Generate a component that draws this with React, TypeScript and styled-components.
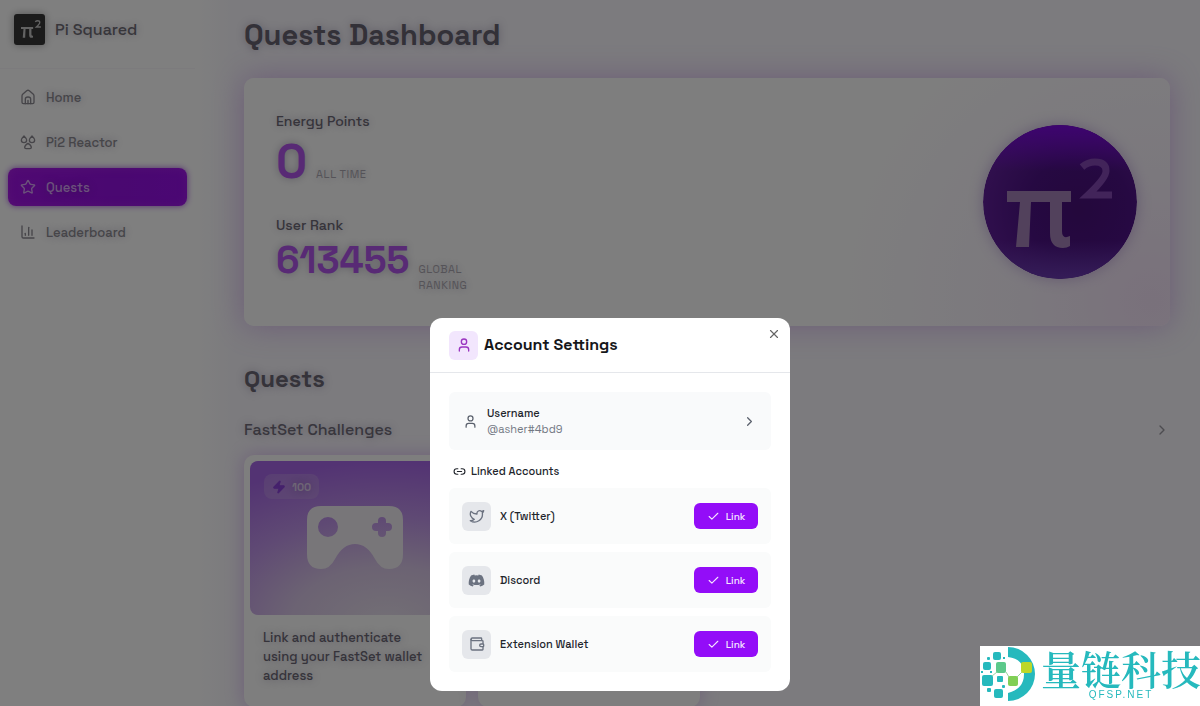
import React from 'react';
import styled, { createGlobalStyle, css } from 'styled-components';
import { Star, ChartColumn, User, X, ChevronRight, Link2, Twitter, Wallet, Check, Zap } from 'lucide-react';
import { FaDiscord } from 'react-icons/fa';

const GlobalStyle = createGlobalStyle`
  *, *::before, *::after { box-sizing: border-box; }
  body {
    margin: 0;
    overflow: hidden;
    font-family: "Space Grotesk", Inter, "Liberation Sans", sans-serif;
    background: #fbfaff;
    color: #6f6c76;
  }
  h1, h2, h3, p { margin: 0; font-weight: inherit; }
  button { font: inherit; color: inherit; border: 0; background: none; padding: 0; cursor: pointer; }
  svg { flex-shrink: 0; }
`;

const Shell = styled.div`
  display: flex;
  height: 100vh;
  overflow: hidden;
  text-shadow: 0 0 8px rgba(60, 50, 90, 0.35);
`;

const Sidebar = styled.aside`
  flex: 0 0 195px;
  background: #fff;
`;

const Brand = styled.div`
  display: flex;
  align-items: center;
  gap: 10px;
  height: 69px;
  padding: 0 14px 10px;
  border-bottom: 1px solid #f8f7fa;
  font-size: 16px;
  font-weight: 500;
`;

const BrandMark = styled.svg`
  width: 31px;
  height: 31px;
  border-radius: 3px;
  background: #363636;
  box-shadow: 0 0 8px rgba(0, 0, 0, 0.35);
`;

const Nav = styled.nav`
  display: flex;
  flex-direction: column;
  gap: 7px;
  padding: 9px 8px;
`;

const NavLink = styled.a<{ $active?: boolean }>`
  display: flex;
  align-items: center;
  gap: 10px;
  height: 38px;
  padding: 0 12px;
  border-radius: 8px;
  color: #8c8a92;
  font-size: 13px;
  font-weight: 500;
  text-decoration: none;
  ${({ $active }) =>
    $active &&
    css`
      color: #d6a5f5;
      background: linear-gradient(90deg, #a012e6, #9410e2 60%, #960fe8);
      box-shadow: 0 0 6px rgba(130, 20, 210, 0.7), inset 0 0 8px rgba(190, 60, 230, 0.4);
    `}
`;

const Main = styled.main`
  flex: 1;
  min-width: 0;
  padding: 18px 30px 0 49px;
  background: linear-gradient(90deg, #fff, #f8f6fc 40px);
`;

const PageTitle = styled.h1`
  font-size: 29px;
  line-height: 34px;
  font-weight: 600;
  color: #666271;
`;

const Stats = styled.section`
  display: flex;
  align-items: center;
  justify-content: space-between;
  height: 248px;
  margin-top: 26px;
  padding: 0 33px 0 32px;
  border-radius: 10px;
  background: radial-gradient(circle at 98% 90%, #f3e2f7 0, #f7f1fb 130px, #fdfdfd 320px);
  box-shadow: 0 0 30px rgba(170, 100, 220, 0.42);
`;

const StatList = styled.div`
  display: flex;
  flex-direction: column;
  gap: 24px;
`;

const StatLabel = styled.h3`
  font-size: 14px;
  line-height: 18px;
  font-weight: 500;
  color: #6d6976;
`;

const StatRow = styled.div`
  display: flex;
  align-items: baseline;
  gap: 8px;
  margin-top: 2px;
`;

const StatValue = styled.strong<{ $large?: boolean }>`
  font-size: ${({ $large }) => ($large ? 48 : 38)}px;
  line-height: ${({ $large }) => ($large ? 60 : 48)}px;
  font-weight: 700;
  color: #b054ea;
`;

const StatNote = styled.span`
  width: 64px;
  padding-left: 1px;
  font-size: 11px;
  line-height: 16px;
  letter-spacing: 0.05em;
  color: #aaa7b0;
`;

const Orb = styled.svg`
  width: 154px;
  height: 154px;
  border-radius: 50%;
  box-shadow: 0 0 14px rgba(110, 60, 170, 0.35);
`;

const SectionTitle = styled.h2`
  margin-top: 38px;
  font-size: 24px;
  line-height: 30px;
  font-weight: 600;
  color: #6b6775;
`;

const GroupHeader = styled.div`
  display: flex;
  align-items: center;
  justify-content: space-between;
  margin-top: 24px;
  font-size: 16px;
  line-height: 24px;
  font-weight: 500;
  color: #716d7b;
`;

const Cards = styled.div`
  display: flex;
  gap: 12px;
  margin-top: 13px;
`;

const Card = styled.article`
  flex: 0 0 222px;
  height: 252px;
  padding: 6px;
  border-radius: 10px;
  background: #fcfcfc;
  box-shadow: 0 0 18px rgba(170, 100, 220, 0.38);
`;

const CardArt = styled.div`
  position: relative;
  display: flex;
  align-items: center;
  justify-content: center;
  height: 154px;
  border-radius: 8px;
  background: radial-gradient(ellipse 130% 105% at 65% 105%, #e6dfeb 0, #d8c6e6 35%, #bf94e8 65%, #a666e6 100%);
`;

const Points = styled.span`
  position: absolute;
  top: 13px;
  left: 14px;
  display: flex;
  align-items: center;
  gap: 6px;
  height: 25px;
  padding: 0 8px;
  border-radius: 8px;
  background: rgba(200, 165, 230, 0.4);
  font-size: 11px;
  font-weight: 600;
  color: #dccbea;
`;

const CardText = styled.p`
  padding: 13px 28px 13px 13px;
  font-size: 13px;
  line-height: 19px;
  font-weight: 500;
  color: #6b6775;
`;

const Overlay = styled.div`
  position: fixed;
  inset: 0;
  display: flex;
  align-items: flex-end;
  justify-content: center;
  padding: 0 0 15px 20px;
  background: rgba(0, 0, 0, 0.5);
`;

const Dialog = styled.section`
  position: relative;
  width: 360px;
  border-radius: 12px;
  background: #fff;
  color: #22252c;
`;

const DialogHeader = styled.header`
  display: flex;
  align-items: center;
  gap: 6px;
  height: 55px;
  padding: 0 19px;
  border-bottom: 1px solid #e5e7eb;
`;

const DialogTitle = styled.h2`
  font-size: 16px;
  line-height: 24px;
  font-weight: 600;
  color: #16171a;
`;

const IconTile = styled.span<{ $accent?: boolean }>`
  display: flex;
  align-items: center;
  justify-content: center;
  width: 29px;
  height: 29px;
  border-radius: 6px;
  background: ${({ $accent }) => ($accent ? '#f2e6fd' : '#e5e7eb')};
  color: ${({ $accent }) => ($accent ? '#9a35c0' : '#6b7280')};
`;

const CloseButton = styled.button`
  position: absolute;
  top: 8px;
  right: 8px;
  display: flex;
  padding: 1px;
  color: #666;
`;

const DialogBody = styled.div`
  padding: 19px;
`;

const UsernameRow = styled.button`
  display: flex;
  align-items: center;
  gap: 9px;
  width: 100%;
  height: 58px;
  padding: 0 14px;
  border-radius: 6px;
  background: #f9fafb;
  color: #5b616d;
  text-align: left;
`;

const UserText = styled.span`
  flex: 1;
  display: flex;
  flex-direction: column;
  font-size: 11px;
  line-height: 16px;
  color: #737883;
`;

const UserName = styled.span`
  font-weight: 500;
  color: #22252c;
`;

const LinkedTitle = styled.h3`
  display: flex;
  align-items: center;
  gap: 5px;
  padding: 13px 4px 9px;
  font-size: 11px;
  line-height: 16px;
  font-weight: 500;
`;

const AccountList = styled.div`
  display: flex;
  flex-direction: column;
  gap: 8px;
`;

const Account = styled.div`
  display: flex;
  align-items: center;
  gap: 9px;
  height: 56px;
  padding: 0 13px;
  border-radius: 6px;
  background: #fafbfb;
  font-size: 11px;
  font-weight: 500;
`;

const LinkButton = styled.button`
  display: flex;
  align-items: center;
  justify-content: center;
  gap: 6px;
  width: 64px;
  height: 26px;
  margin-left: auto;
  border-radius: 6px;
  background: #930df8;
  color: #f6e6ff;
  font-size: 10px;
  font-weight: 500;
`;

const Watermark = styled.aside`
  position: fixed;
  right: 0;
  bottom: 0;
  display: flex;
  width: 220px;
  height: 60px;
  background: #fff;
  color: #26b9bd;
`;

const WatermarkText = styled.div`
  display: flex;
  flex-direction: column;
  align-items: center;
  width: 160px;
  padding-left: 2px;
  font-family: "Liberation Sans", sans-serif;
  font-size: 10px;
  line-height: 12px;
  letter-spacing: 2px;
`;

const WatermarkName = styled.span`
  font-family: "Noto Serif CJK SC", "Noto Sans CJK SC", serif;
  font-size: 40px;
  font-weight: 600;
  line-height: 43px;
  letter-spacing: 0;
  white-space: nowrap;
`;

const PiShape = () => (
  <path d="M0 0H64V11H55V40Q55 47 60 46L63 45V55Q60 57 56 57Q43 57 43 42V11H24L22 56H9L13 11H0Z" />
);

const TwoShape = () => (
  <path d="M1 9Q7 4 14 4Q25 4 25 13Q25 20 7 37H31" fill="none" strokeWidth="7" />
);

const HomeIcon = () => (
  <svg width="16" height="16" viewBox="0 0 24 24" fill="none" stroke="currentColor" strokeWidth="2" strokeLinejoin="round" strokeLinecap="round">
    <path d="M3 10.5Q3 9 4 8L10 2.6Q12 1.2 14 2.6L20 8Q21 9 21 10.5V20Q21 22 19 22H5Q3 22 3 20Z" />
    <path d="M8 22V15Q8 12 12 12T16 15V22M12 17V22" />
  </svg>
);

const ReactorIcon = () => (
  <svg width="16" height="16" viewBox="0 0 24 24" fill="none" stroke="currentColor" strokeWidth="2" strokeLinejoin="round">
    <path d="M6 3Q10 7 10 9A4 4 0 0 1 2 9Q2 7 6 3Z" />
    <path d="M18 3Q22 7 22 9A4 4 0 0 1 14 9Q14 7 18 3Z" />
    <path d="M12 14Q17 17 17 20Q17 22 15 22H9Q7 22 7 20Q7 17 12 14Z" />
  </svg>
);

const Gamepad = () => (
  <svg width="96" height="64" viewBox="0 0 96 64">
    <path
      fill="#f0edf2"
      fillRule="evenodd"
      d="M14 0H82Q96 0 96 14V48Q96 63 82 63Q73 63 68 53Q60 38 48 38T28 53Q23 63 14 63Q0 63 0 48V14Q0 0 14 0ZM21 11A10 10 0 1 0 21 31A10 10 0 1 0 21 11ZM75 11Q71 11 71 15V17H69Q65 17 65 21T69 25H71V27Q71 31 75 31T79 27V25H81Q85 25 85 21T81 17H79V15Q79 11 75 11Z"
    />
  </svg>
);

const QfspLogo = () => (
  <svg width="60" height="60" viewBox="0 0 60 60" aria-hidden="true">
    <path fill="#26b9bd" d="M28 1A27 27 0 0 1 28 55V47Q44 43 44 28T28 11Z" />
    <g fill="#26b9bd">
      <rect x="13" y="6" width="8" height="8" rx="2" />
      <rect x="3" y="16" width="8" height="8" rx="2" />
      <rect x="2" y="29" width="11" height="11" rx="2" />
      <rect x="17" y="30" width="6" height="6" rx="1" />
      <rect x="14" y="43" width="9" height="9" rx="2" />
      <rect x="7" y="42" width="4" height="4" rx="1" />
      <rect x="7" y="11" width="3" height="3" rx="1" />
      <rect x="1" y="25" width="2" height="2" />
      <rect x="10" y="25" width="2" height="2" />
      <rect x="23" y="11" width="2" height="2" />
      <rect x="22" y="39" width="3" height="3" rx="1" />
    </g>
    <path d="M26 26L29 31M37 31L42 26M12 30L17 26" stroke="#9ad6a0" />
    <rect x="16" y="16" width="10" height="11" rx="2" fill="#5cc98a" />
    <rect x="28" y="30" width="10" height="10" rx="2" fill="#80cf55" />
    <rect x="41" y="16" width="11" height="11" rx="2" fill="#bcd728" />
  </svg>
);

const accounts = [
  { name: 'X (Twitter)', icon: <Twitter size={16} strokeWidth={2} /> },
  { name: 'Discord', icon: <FaDiscord size={17} /> },
  { name: 'Extension Wallet', icon: <Wallet size={16} strokeWidth={2} /> },
];

export default function App() {
  return (
    <>
      <GlobalStyle />
      <Shell>
        <Sidebar>
          <Brand>
            <BrandMark viewBox="0 0 31 31" role="img" aria-label="Pi Squared logo">
              <g fill="#c4c4c4" transform="translate(7 13) scale(.19)"><PiShape /></g>
              <g stroke="#c4c4c4" transform="translate(21 6) scale(.19)"><TwoShape /></g>
            </BrandMark>
            Pi Squared
          </Brand>
          <Nav>
            <NavLink href="#home"><HomeIcon />Home</NavLink>
            <NavLink href="#reactor"><ReactorIcon />Pi2 Reactor</NavLink>
            <NavLink href="#quests" $active><Star size={16} strokeWidth={2} />Quests</NavLink>
            <NavLink href="#leaderboard"><ChartColumn size={16} strokeWidth={2} />Leaderboard</NavLink>
          </Nav>
        </Sidebar>
        <Main>
          <PageTitle>Quests Dashboard</PageTitle>
          <Stats>
            <StatList>
              <div>
                <StatLabel>Energy Points</StatLabel>
                <StatRow><StatValue $large>0</StatValue><StatNote>ALL TIME</StatNote></StatRow>
              </div>
              <div>
                <StatLabel>User Rank</StatLabel>
                <StatRow><StatValue>613455</StatValue><StatNote>GLOBAL RANKING</StatNote></StatRow>
              </div>
            </StatList>
            <Orb viewBox="0 0 154 154" role="img" aria-label="Pi squared">
              <defs>
                <radialGradient id="orb" cx=".62" cy=".55" r=".65">
                  <stop offset="0" stopColor="#481078" />
                  <stop offset=".5" stopColor="#4c1284" />
                  <stop offset="1" stopColor="#62209c" />
                </radialGradient>
                <linearGradient id="orbShine" x1="0" y1="0" x2="0" y2="1">
                  <stop offset="0" stopColor="#7c08e0" />
                  <stop offset=".3" stopColor="#7c08e0" stopOpacity="0" />
                  <stop offset=".75" stopColor="#6a3ab0" stopOpacity="0" />
                  <stop offset="1" stopColor="#6a3ab0" />
                </linearGradient>
              </defs>
              <circle cx="77" cy="77" r="77" fill="url(#orb)" />
              <circle cx="77" cy="77" r="77" fill="url(#orbShine)" />
              <g fill="#a583b8" transform="translate(24 66)"><PiShape /></g>
              <g stroke="#8448b4" transform="translate(98 33)"><TwoShape /></g>
            </Orb>
          </Stats>
          <SectionTitle>Quests</SectionTitle>
          <GroupHeader>FastSet Challenges<ChevronRight size={16} color="#9a98a0" /></GroupHeader>
          <Cards>
            <Card>
              <CardArt>
                <Points><Zap size={14} fill="#8a42d8" color="#8a42d8" />100</Points>
                <Gamepad />
              </CardArt>
              <CardText>Link and authenticate using your FastSet wallet address</CardText>
            </Card>
            <Card />
          </Cards>
        </Main>
      </Shell>
      <Overlay>
        <Dialog role="dialog" aria-modal="true" aria-labelledby="dialog-title">
          <DialogHeader>
            <IconTile $accent><User size={16} /></IconTile>
            <DialogTitle id="dialog-title">Account Settings</DialogTitle>
          </DialogHeader>
          <CloseButton aria-label="Close"><X size={14} strokeWidth={2} /></CloseButton>
          <DialogBody>
            <UsernameRow>
              <User size={15} />
              <UserText><UserName>Username</UserName>@asher#4bd9</UserText>
              <ChevronRight size={15} />
            </UsernameRow>
            <LinkedTitle><Link2 size={13} />Linked Accounts</LinkedTitle>
            <AccountList>
              {accounts.map(({ name, icon }) => (
                <Account key={name}>
                  <IconTile>{icon}</IconTile>
                  {name}
                  <LinkButton aria-label={`Link ${name}`}><Check size={13} />Link</LinkButton>
                </Account>
              ))}
            </AccountList>
          </DialogBody>
        </Dialog>
      </Overlay>
      <Watermark>
        <QfspLogo />
        <WatermarkText><WatermarkName>量链科技</WatermarkName>QFSP.NET</WatermarkText>
      </Watermark>
    </>
  );
}
